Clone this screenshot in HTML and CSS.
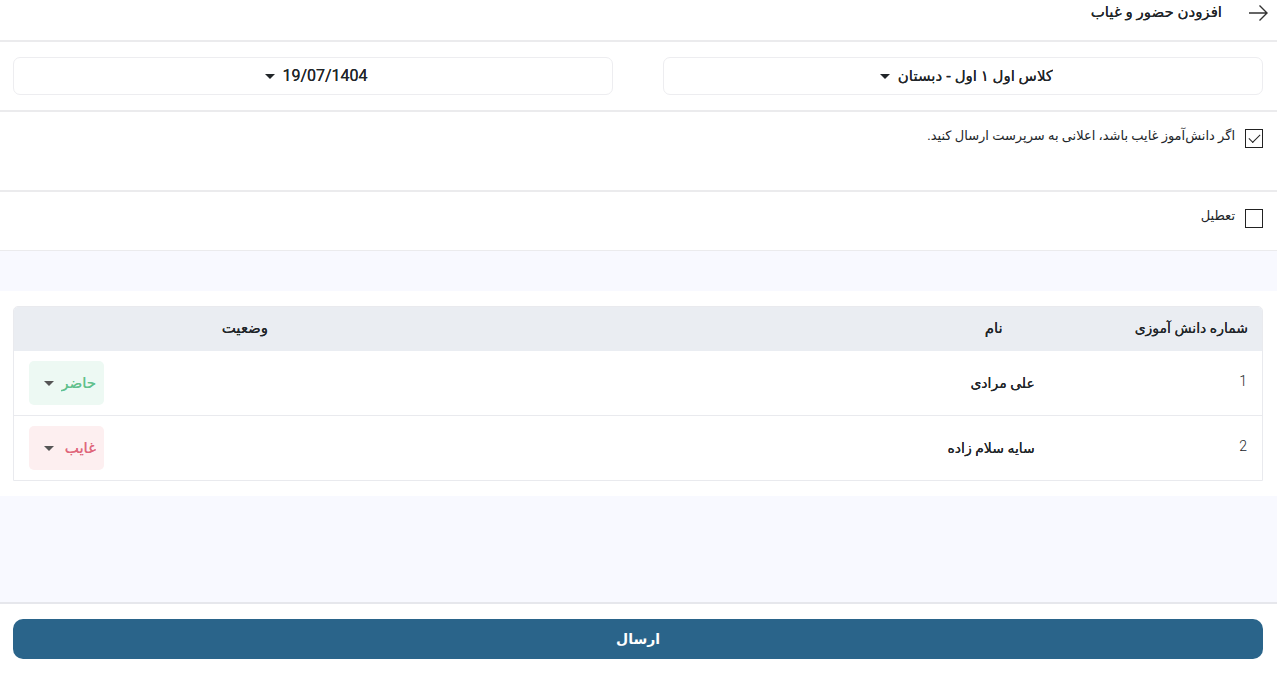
FILE: index.html
```
<!DOCTYPE html>
<html lang="fa" dir="rtl">
<head>
    <meta charset="UTF-8">
    <meta name="viewport" content="width=device-width, initial-scale=1.0">
    <title>افزودن حضور و غیاب</title>
    <link rel="stylesheet" href="styles.css">
</head>
<body>
    <header class="header">
        <button type="button" class="back-button" aria-label="بازگشت">
            <svg width="20" height="20" viewBox="0 0 20 20" fill="none" stroke="#333" stroke-width="1.4">
                <path d="M1 10H18.5M11.5 2.5L19 10L11.5 17.5"/>
            </svg>
        </button>
        <h1 class="title">افزودن حضور و غیاب</h1>
    </header>

    <div class="filters">
        <div class="filter">
            <select class="filter-value" aria-label="کلاس">
                <option>کلاس اول ۱ اول - دبستان</option>
            </select>
            <svg class="caret" viewBox="0 0 10 5"><path d="M0 0H10L5 5Z"/></svg>
        </div>
        <button type="button" class="filter">
            <span class="filter-value date">19/07/1404</span>
            <svg class="caret" viewBox="0 0 10 5"><path d="M0 0H10L5 5Z"/></svg>
        </button>
    </div>

    <div class="option notify">
        <input type="checkbox" class="checkbox" id="notify" checked>
        <label for="notify">اگر دانش‌آموز غایب باشد، اعلانی به سرپرست ارسال کنید.</label>
    </div>
    <div class="option holiday">
        <input type="checkbox" class="checkbox" id="holiday">
        <label for="holiday">تعطیل</label>
    </div>

    <main class="students">
        <div class="table-box">
            <table>
                <colgroup>
                    <col class="col-number">
                    <col class="col-name">
                    <col>
                    <col class="col-status">
                </colgroup>
                <thead>
                    <tr>
                        <th class="number">شماره دانش آموزی</th>
                        <th>نام</th>
                        <td></td>
                        <th>وضعیت</th>
                    </tr>
                </thead>
                <tbody>
                    <tr>
                        <td class="number">1</td>
                        <td class="name">علی مرادی</td>
                        <td></td>
                        <td class="status-cell">
                            <div class="status present">
                                <select aria-label="وضعیت علی مرادی">
                                    <option>حاضر</option>
                                </select>
                                <svg class="caret" viewBox="0 0 10 5"><path d="M0 0H10L5 5Z"/></svg>
                            </div>
                        </td>
                    </tr>
                    <tr>
                        <td class="number">2</td>
                        <td class="name">سایه سلام زاده</td>
                        <td></td>
                        <td class="status-cell">
                            <div class="status absent">
                                <select aria-label="وضعیت سایه سلام زاده">
                                    <option>غایب</option>
                                </select>
                                <svg class="caret" viewBox="0 0 10 5"><path d="M0 0H10L5 5Z"/></svg>
                            </div>
                        </td>
                    </tr>
                </tbody>
            </table>
        </div>
    </main>

    <footer class="footer">
        <button type="submit" class="submit-button">ارسال</button>
    </footer>
</body>
</html>
```
FILE: styles.css
```
* {
    box-sizing: border-box;
}

body {
    margin: 0;
    min-height: 100vh;
    display: flex;
    flex-direction: column;
    background-color: #f8f9ff;
    color: #212529;
    font-family: Roboto, "DejaVu Sans", sans-serif;
    font-size: 14px;
}

button,
select {
    font-family: inherit;
    color: inherit;
    border: none;
    background: none;
    padding: 0;
    cursor: pointer;
}

select {
    appearance: none;
}

/* the Persian font has no medium weight, thicken it a little */
.title,
.filter-value,
.name,
.status select,
th {
    text-shadow: 0 0 currentColor;
}

.caret {
    width: 10px;
    height: 5px;
    fill: currentColor;
}

.header {
    display: flex;
    align-items: flex-start;
    gap: 26px;
    height: 42px;
    padding: 0 9px;
    background-color: #fff;
    border-bottom: 2px solid #ebebed;
}

.back-button {
    display: flex;
    margin-top: 3px;
}

.title {
    margin: 0;
    font-size: 15px;
    line-height: 24px;
    font-weight: 500;
}

.filters {
    display: flex;
    gap: 50px;
    padding: 15px 14px 15px 13px;
    background-color: #fff;
    border-bottom: 2px solid #ebebed;
}

.filter {
    flex: 1;
    display: flex;
    align-items: center;
    justify-content: center;
    gap: 7px;
    height: 38px;
    padding-left: 7px;
    border: 1px solid #ededf0;
    border-radius: 7px;
}

.filter-value {
    font-size: 15px;
    font-weight: 500;
}

.date {
    font-size: 16px;
    font-weight: 400;
    padding-bottom: 2px;
}

.option {
    display: flex;
    align-items: flex-start;
    gap: 10px;
    padding: 17px 14px;
    background-color: #fff;
}

.option label {
    font-size: 13px;
    line-height: 14px;
}

.notify {
    height: 80px;
    border-bottom: 2px solid #ebebed;
}

.holiday {
    height: 59px;
    border-bottom: 1px solid #ebebed;
}

.checkbox {
    appearance: none;
    display: flex;
    align-items: center;
    justify-content: center;
    width: 18px;
    height: 19px;
    margin: 0;
    border: 1px solid #222;
}

.checkbox:checked::before {
    content: "";
    width: 10px;
    height: 5px;
    margin-bottom: 3px;
    border-left: 1px solid #222;
    border-bottom: 1px solid #222;
    transform: rotate(-45deg);
}

.students {
    margin-top: 40px;
    padding: 15px 14px 15px 13px;
    background-color: #fff;
}

.table-box {
    border: 1px solid #e9eaee;
    border-radius: 5px 5px 0 0;
    overflow: hidden;
}

table {
    width: 100%;
    table-layout: fixed;
    border-spacing: 0;
}

.col-number {
    width: 17%;
}

.col-name {
    width: 9%;
}

.col-status {
    width: 37%;
}

thead {
    background-color: #eaedf2;
}

th {
    height: 44px;
    padding: 0 0 2px;
    font-size: 15px;
    font-weight: 500;
}

th.number {
    padding-right: 14px;
    text-align: right;
    font-size: 14px;
}

td {
    padding: 0;
}

tbody td {
    height: 64px;
}

tbody tr:first-child td {
    height: 65px;
    border-bottom: 1px solid #e9eaee;
}

td.number {
    padding: 0 15px 4px 0;
    font-weight: 300;
}

.name {
    padding-right: 15px;
    font-weight: 500;
    white-space: nowrap;
}

.status-cell {
    padding-left: 15px;
}

.status {
    display: flex;
    align-items: center;
    justify-content: space-between;
    width: 75px;
    height: 44px;
    margin-right: auto;
    padding: 0 8px 0 15px;
    border-radius: 5px;
}

.status select {
    font-size: 15px;
    font-weight: 500;
}

.status .caret {
    fill: #555;
}

.present {
    background-color: #edf9f3;
    color: #62c18d;
}

.absent {
    background-color: #fdeff0;
    color: #e0677c;
}

.footer {
    margin-top: auto;
    padding: 15px 14px 14px 13px;
    background-color: #fff;
    border-top: 2px solid #e6e7ec;
}

.submit-button {
    width: 100%;
    height: 40px;
    border-radius: 10px;
    background-color: #2a648a;
    color: #fff;
    font-size: 14px;
    font-weight: 700;
}
```
